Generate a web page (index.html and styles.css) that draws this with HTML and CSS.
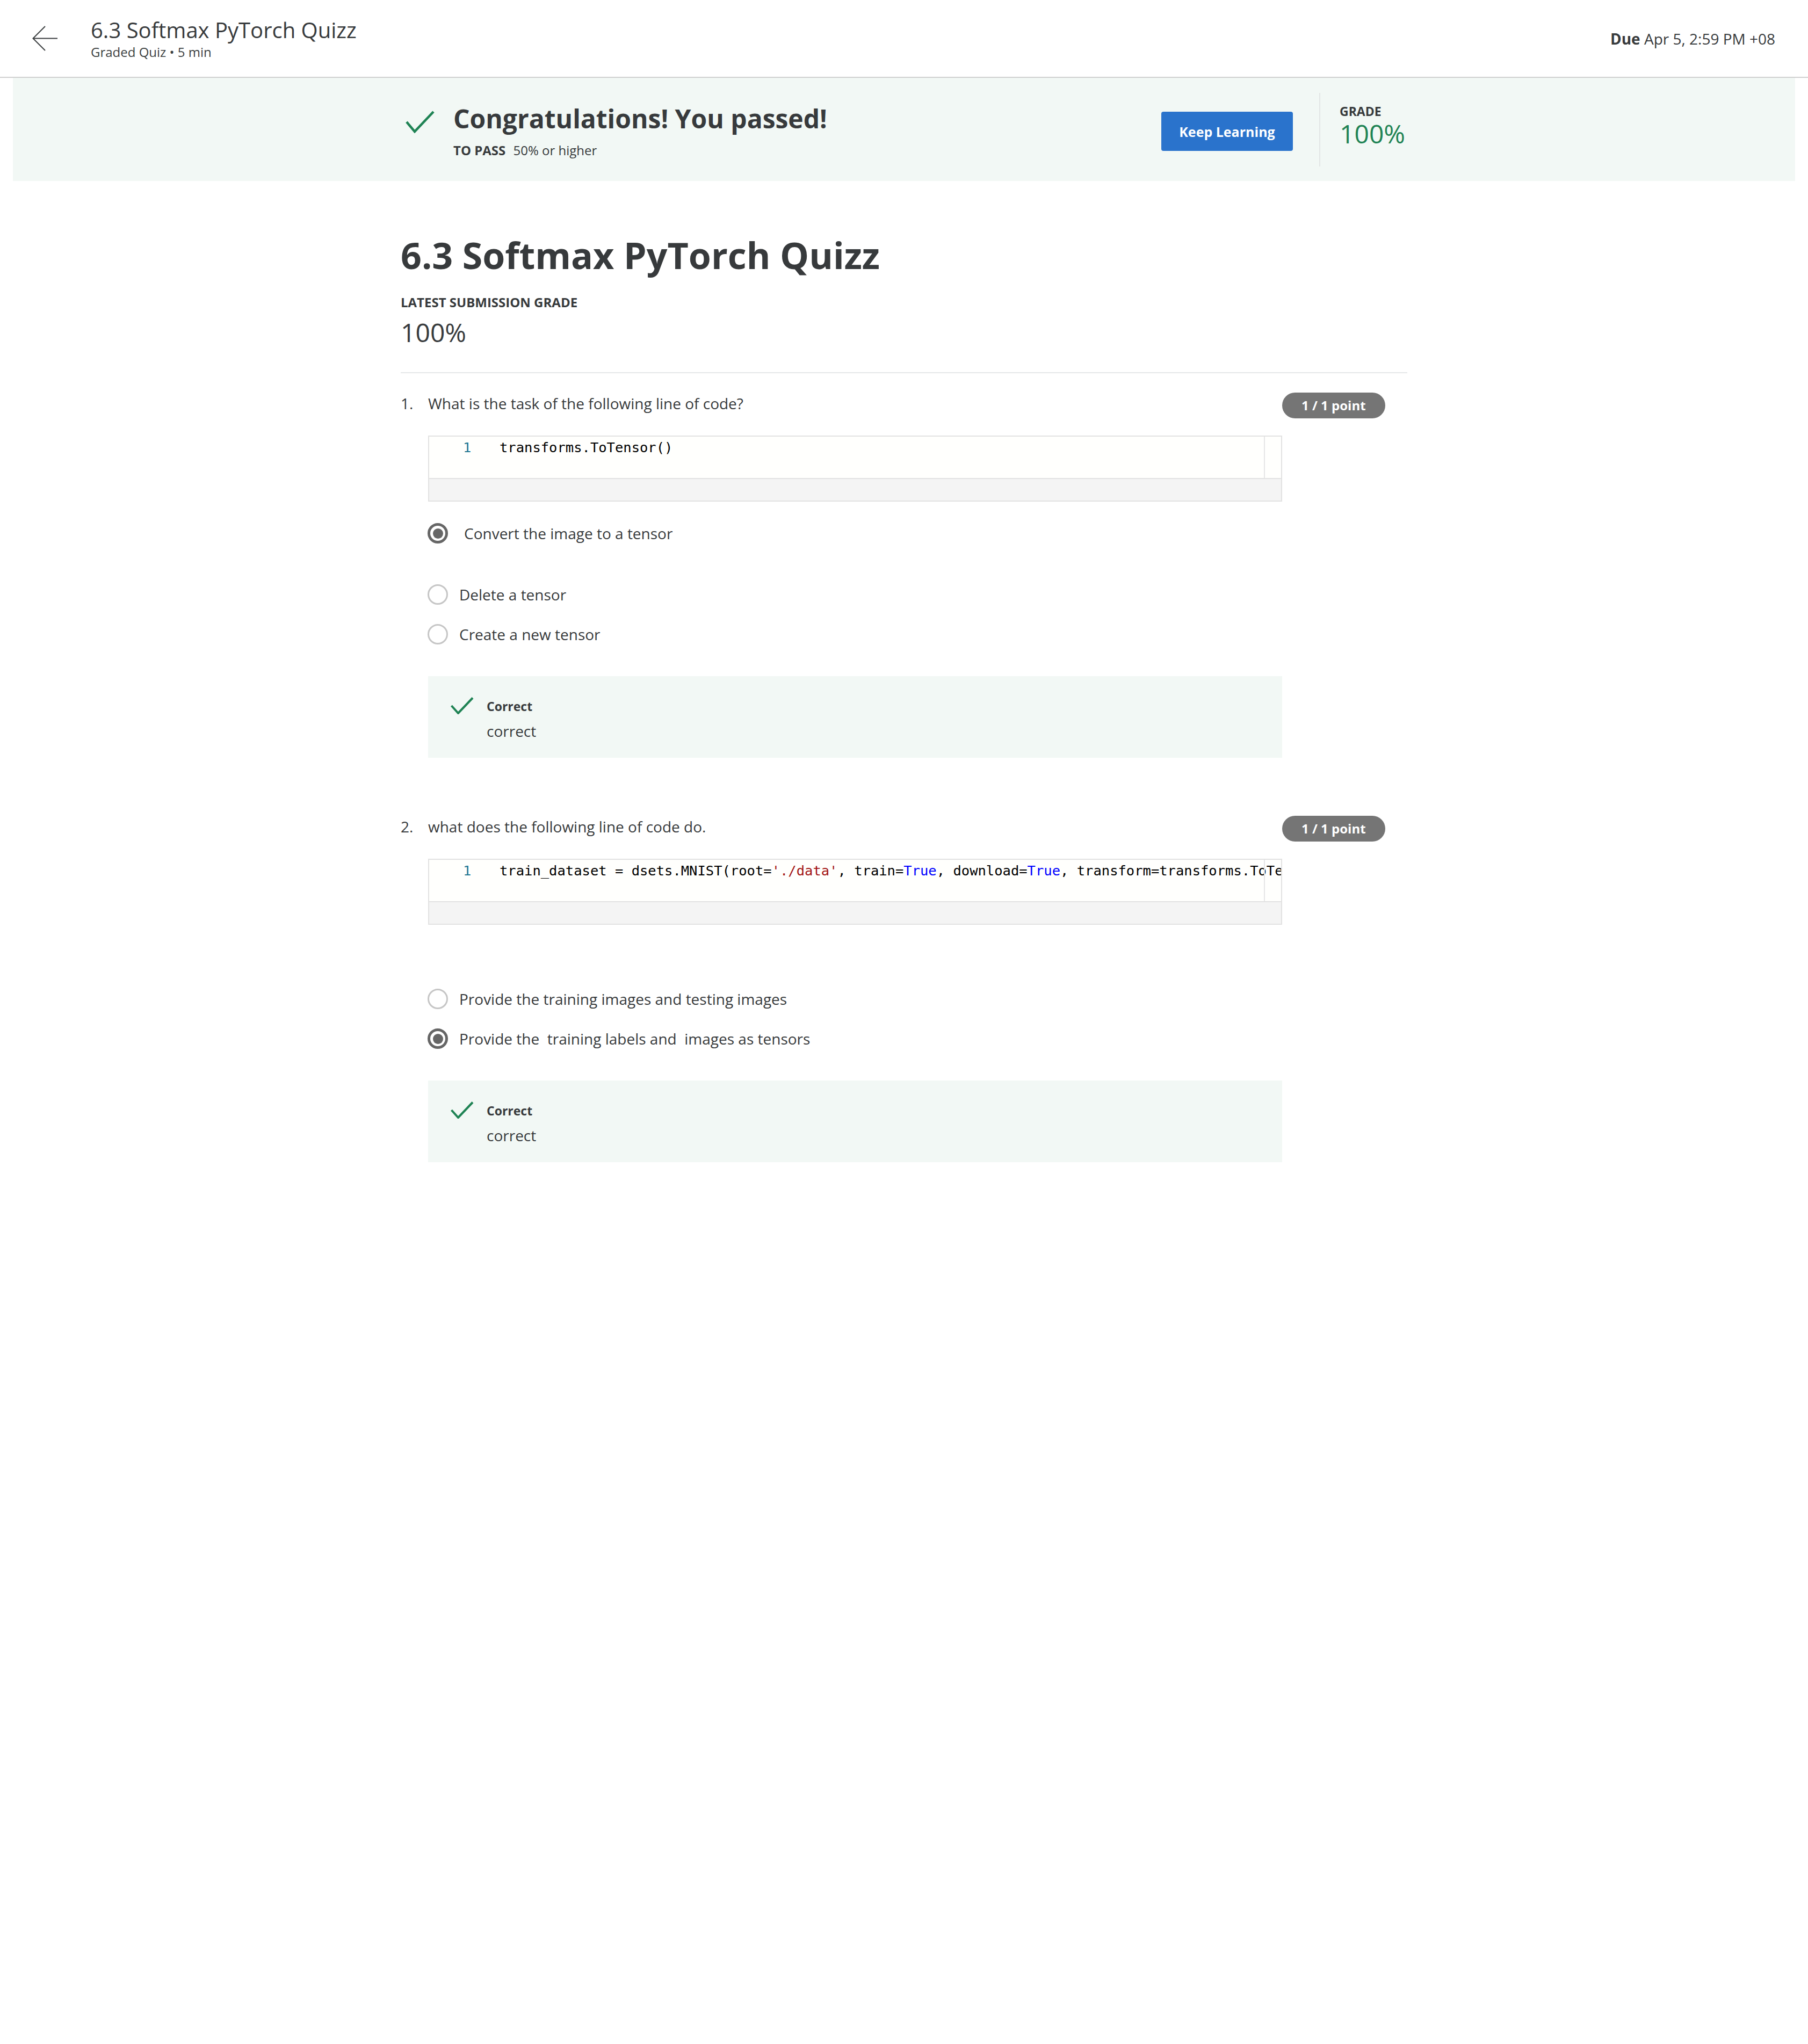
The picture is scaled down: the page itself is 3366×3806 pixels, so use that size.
FILE: index.html
```html
<!DOCTYPE html>
<html lang="en">
<head>
<meta charset="utf-8">
<title>6.3 Softmax PyTorch Quizz</title>
<link rel="stylesheet" href="styles.css">
</head>
<body>
<header class="topbar">
  <div class="topbar-left">
    <svg class="back-icon" viewBox="0 0 48 48" width="48" height="48" aria-hidden="true"><path d="M24 1 L1.5 23.5 L24 46 M1.5 23.5 H47" fill="none" stroke="#3c3f41" stroke-width="2"/></svg>
    <div class="topbar-titles">
      <div class="topbar-title">6.3 Softmax PyTorch Quizz</div>
      <div class="topbar-sub">Graded Quiz • 5 min</div>
    </div>
  </div>
  <div class="due"><b>Due</b> Apr 5, 2:59 PM +08</div>
</header>

<section class="banner">
  <div class="banner-inner">
    <div class="banner-left">
      <svg class="pass-check" viewBox="0 0 54 42" width="54" height="42" aria-hidden="true"><path d="M2 21 L17 39 L52 2" fill="none" stroke="#1f8354" stroke-width="4.5"/></svg>
      <div class="pass-text">
        <h2 class="pass-title">Congratulations! You passed!</h2>
        <div class="pass-req"><b>TO PASS</b> 50% or higher</div>
      </div>
    </div>
    <div class="banner-right">
      <button class="keep-btn" type="button">Keep Learning</button>
      <div class="vdivider"></div>
      <div class="grade-box">
        <div class="grade-label">GRADE</div>
        <div class="grade-value">100%</div>
      </div>
    </div>
  </div>
</section>

<main class="content">
  <h1 class="quiz-title">6.3 Softmax PyTorch Quizz</h1>
  <div class="latest-label">LATEST SUBMISSION GRADE</div>
  <div class="latest-value">100%</div>
  <hr class="divider">

  <div class="question">
    <div class="q-num">1.</div>
    <div class="q-body">
      <div class="q-text">What is the task of the following line of code?</div>
      <div class="code-wrap">
        <div class="editor">
          <div class="code-line"><span class="ln">1</span><span>transforms.ToTensor()</span></div>
        </div>
      </div>
      <div class="options">
        <div class="option option-rich"><span class="radio checked"></span><span class="opt-text">Convert the image to a tensor</span></div>
        <div class="option"><span class="radio"></span><span class="opt-text">Delete a tensor</span></div>
        <div class="option"><span class="radio"></span><span class="opt-text">Create a new tensor</span></div>
      </div>
      <div class="feedback">
        <svg class="fb-check" viewBox="0 0 43 32" width="43" height="32" aria-hidden="true"><path d="M1.5 16 L14 30 L41 1.5" fill="none" stroke="#1f8354" stroke-width="4"/></svg>
        <div class="fb-body">
          <div class="fb-title">Correct</div>
          <div class="fb-text">correct</div>
        </div>
      </div>
    </div>
    <div class="points">1 / 1 point</div>
  </div>

  <div class="question question-next">
    <div class="q-num">2.</div>
    <div class="q-body">
      <div class="q-text">what does the following line of code do.</div>
      <div class="code-wrap">
        <div class="editor">
          <div class="code-line"><span class="ln">1</span><span class="code-text">train_dataset = dsets.MNIST(root=<span class="tok-str">'./data'</span>, train=<span class="tok-kw">True</span>, download=<span class="tok-kw">True</span>, transform=transforms.ToTensor())</span></div>
        </div>
      </div>
      <div class="options options-spaced">
        <div class="option"><span class="radio"></span><span class="opt-text">Provide the training images and testing images</span></div>
        <div class="option"><span class="radio checked"></span><span class="opt-text">Provide the&nbsp; training labels and&nbsp; images as tensors</span></div>
      </div>
      <div class="feedback">
        <svg class="fb-check" viewBox="0 0 43 32" width="43" height="32" aria-hidden="true"><path d="M1.5 16 L14 30 L41 1.5" fill="none" stroke="#1f8354" stroke-width="4"/></svg>
        <div class="fb-body">
          <div class="fb-title">Correct</div>
          <div class="fb-text">correct</div>
        </div>
      </div>
    </div>
    <div class="points">1 / 1 point</div>
  </div>
</main>
</body>
</html>
```

FILE: styles.css
```css
html, body {
  margin: 0;
  padding: 0;
  background: #ffffff;
}

body {
  font-family: "Open Sans", "Liberation Sans", sans-serif;
  color: #373a3c;
  min-height: 3806px;
}

/* ---------- top bar ---------- */
.topbar {
  display: flex;
  align-items: center;
  justify-content: space-between;
  height: 143px;
  padding: 0 61px 0 60px;
  border-bottom: 2px solid #d0d0d0;
}

.topbar-left {
  display: flex;
  align-items: center;
}

.back-icon {
  width: 48px;
  height: 48px;
  margin-right: 61px;
  flex: none;
}

.topbar-title {
  font-size: 40px;
  line-height: 48px;
  color: #373a3c;
}

.topbar-sub {
  font-size: 24px;
  line-height: 30px;
  margin-top: 2px;
  color: #3c3f41;
}

.due {
  font-size: 28px;
  color: #373a3c;
}

.due b {
  font-weight: 700;
}

/* ---------- banner ---------- */
.banner {
  margin: 0 24px;
  height: 192px;
  background: #f2f8f5;
}

.banner-inner {
  width: 1874px;
  height: 100%;
  margin: 0 auto;
  display: flex;
  justify-content: space-between;
}

.banner-left {
  display: flex;
  align-items: flex-start;
  padding-top: 47px;
  padding-left: 9px;
}

.pass-check {
  width: 54px;
  height: 42px;
  margin-top: 14px;
  margin-right: 35px;
  flex: none;
}

.pass-title {
  margin: 0;
  font-size: 48px;
  line-height: 58px;
  font-weight: 700;
  color: #373a3c;
}

.pass-req {
  margin-top: 14px;
  font-size: 24px;
  line-height: 32px;
}

.pass-req b {
  font-weight: 700;
  margin-right: 8px;
}

.banner-right {
  display: flex;
  align-items: center;
}

.keep-btn {
  width: 245px;
  height: 73px;
  margin-top: 7px;
  margin-right: 49px;
  border: none;
  border-radius: 4px;
  background: #2a73cc;
  color: #ffffff;
  font-family: "Open Sans", "Liberation Sans", sans-serif;
  font-size: 25px;
  font-weight: 700;
  padding: 0;
}

.vdivider {
  width: 2px;
  height: 137px;
  background: #e3e6e5;
  margin-right: 36px;
}

.grade-box {
  padding-bottom: 12px;
  padding-right: 4px;
}

.grade-label {
  font-size: 23px;
  line-height: 28px;
  font-weight: 700;
}

.grade-value {
  font-size: 48px;
  line-height: 56px;
  font-weight: 400;
  color: #1f8354;
}

/* ---------- content ---------- */
.content {
  width: 1874px;
  margin: 0 auto;
}

.quiz-title {
  margin: 98px 0 0;
  font-size: 68px;
  line-height: 80px;
  font-weight: 700;
  color: #373a3c;
}

.latest-label {
  margin-top: 32px;
  font-size: 24px;
  line-height: 32px;
  font-weight: 700;
}

.latest-value {
  margin-top: 12px;
  font-size: 48px;
  line-height: 56px;
  font-weight: 400;
}

.divider {
  margin: 46px 0 0;
  border: 0;
  height: 2px;
  background: #e6e8e9;
}

/* ---------- questions ---------- */
.question {
  display: flex;
  align-items: flex-start;
  margin-top: 36px;
}

.question-next {
  margin-top: 108px;
}

.q-num {
  width: 51px;
  flex: none;
  font-size: 28px;
  line-height: 40px;
}

.q-body {
  width: 1590px;
  flex: none;
}

.q-text {
  font-size: 28px;
  line-height: 40px;
}

.points {
  flex: none;
  height: 48px;
  line-height: 48px;
  padding: 0 36px;
  border-radius: 24px;
  background: #757575;
  color: #ffffff;
  font-size: 24px;
  font-weight: 700;
  white-space: nowrap;
}

/* code block */
.code-wrap {
  margin-top: 40px;
  border: 2px solid #e2e2e2;
  background: #f4f4f4;
  padding-bottom: 40px;
}

.editor {
  position: relative;
  height: 75px;
  padding-top: 2px;
  background: #fffffd;
  border-bottom: 2px solid #e2e2e2;
  overflow: hidden;
  font-family: "DejaVu Sans Mono", "Liberation Mono", monospace;
  font-size: 25.5px;
  line-height: 36px;
  color: #000000;
}

.editor::after {
  content: "";
  position: absolute;
  top: 0;
  bottom: 0;
  right: 30px;
  width: 2px;
  background: #e6e6e6;
}

.code-line {
  display: flex;
  white-space: pre;
}

.code-text {
  flex: none;
}

.ln {
  flex: none;
  width: 68px;
  margin-left: 63px;
  color: #237893;
}

.tok-str {
  color: #a31515;
}

.tok-kw {
  color: #0000ff;
}

/* options */
.options {
  display: flex;
  flex-direction: column;
  gap: 34px;
  margin-top: 39px;
}

.options-spaced {
  margin-top: 118px;
}

.option {
  display: flex;
  align-items: center;
  min-height: 40px;
  font-size: 28px;
  line-height: 40px;
}

.option-rich {
  margin-bottom: 40px;
}

.option-rich .opt-text {
  padding-left: 9px;
}

.radio {
  flex: none;
  box-sizing: border-box;
  width: 38px;
  height: 38px;
  margin-left: -1px;
  margin-right: 21px;
  border-radius: 50%;
  border: 3px solid #c6c6c6;
  background: #ffffff;
}

.radio.checked {
  border: 5px solid #666666;
  display: flex;
  align-items: center;
  justify-content: center;
}

.radio.checked::after {
  content: "";
  width: 19px;
  height: 19px;
  border-radius: 50%;
  background: #666666;
}

/* feedback */
.feedback {
  display: flex;
  align-items: flex-start;
  margin-top: 58px;
  padding: 40px 42px 30px;
  background: #f2f8f5;
}

.fb-check {
  flex: none;
  width: 43px;
  height: 32px;
  margin-top: -1px;
  margin-right: 24px;
}

.fb-title {
  font-size: 23px;
  line-height: 32px;
  font-weight: 700;
}

.fb-text {
  margin-top: 10px;
  font-size: 28px;
  line-height: 40px;
}
```
